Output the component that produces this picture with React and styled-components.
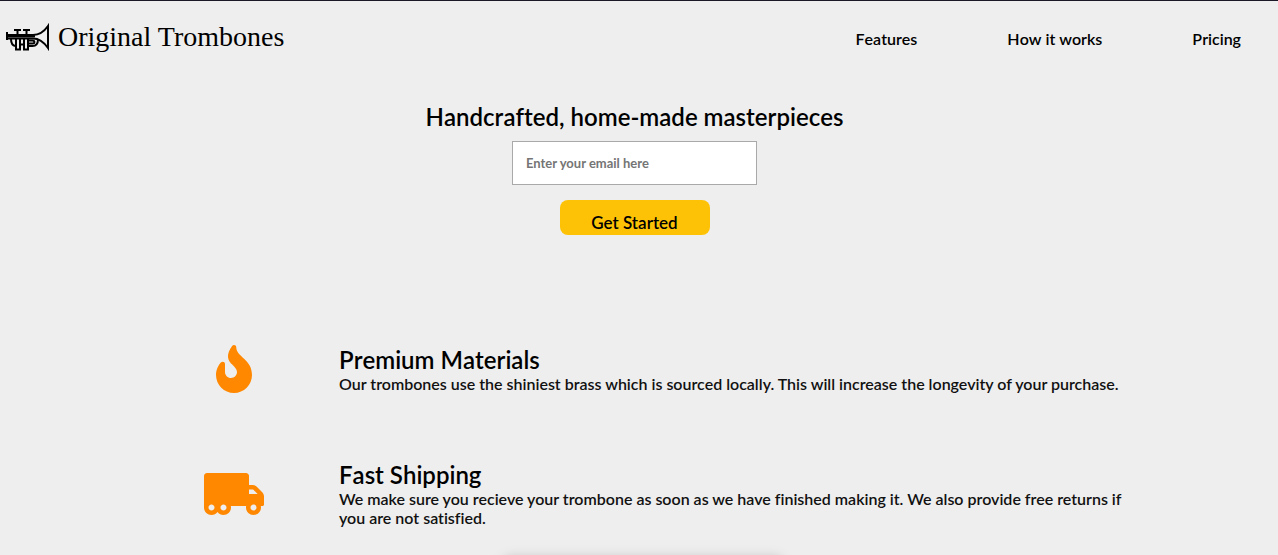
import React from "react";
import styled, { createGlobalStyle } from "styled-components";
import { FaFire, FaTruckMoving } from "react-icons/fa";

const GlobalStyle = createGlobalStyle`
  *, *::before, *::after { box-sizing: border-box; }
  body {
    margin: 0;
    background: #eee;
    color: #000;
    font-family: Lato, sans-serif;
    font-weight: 600;
    font-variant-ligatures: none;
    font-kerning: none;
  }
`;

const Page = styled.div`
  max-height: 100vh;
  overflow: hidden;
  border-top: 1px solid #1c1726;
  padding-right: 9px;
`;

const Header = styled.header`
  display: flex;
  align-items: center;
  justify-content: space-between;
  height: 76px;
  padding: 0 28px 0 5px;
`;

const Brand = styled.a`
  display: flex;
  align-items: center;
  gap: 8px;
  margin-bottom: 4px;
  color: #000;
  text-decoration: none;
  font: 400 28px/36px "Liberation Serif", serif;
  font-kerning: normal;
  white-space: nowrap;
`;

const Nav = styled.nav`
  display: flex;
  gap: 90px;
`;

const NavLink = styled.a`
  color: #000;
  font-size: 16px;
  line-height: 20px;
  text-decoration: none;
`;

const Hero = styled.form`
  display: flex;
  flex-direction: column;
  align-items: center;
  padding-top: 25px;
`;

const Title = styled.h1`
  margin: 0 0 10px;
  font-size: 24px;
  line-height: 29px;
  font-weight: 600;
`;

const EmailInput = styled.input`
  width: 245px;
  height: 44px;
  margin-bottom: 15px;
  padding: 0 13px;
  border: 1px solid #a9a9a9;
  background: #fff;
  font: 700 13px/16px Lato, sans-serif;
  &::placeholder { color: #757575; }
`;

const SubmitButton = styled.button`
  width: 150px;
  height: 35px;
  padding: 10px 0 0;
  border: 0;
  border-radius: 8px;
  background: #fdc206;
  color: #000;
  font: 600 17px/25px Lato, sans-serif;
`;

const Features = styled.section`
  display: flex;
  flex-direction: column;
  gap: 67px;
  width: 80%;
  max-width: 1015px;
  margin: 0 auto;
  padding-top: 110px;
`;

const Feature = styled.article`
  display: grid;
  grid-template-columns: 212px 1fr;
  align-items: center;
  padding-right: 14px;
`;

const FeatureIcon = styled.div`
  display: flex;
  justify-content: center;
  padding-left: 2px;
  color: #ff8800;
  svg { width: 60px; height: 48px; }
`;

const FeatureTitle = styled.h2`
  margin: 0;
  font-size: 24px;
  line-height: 29px;
  font-weight: 600;
`;

const FeatureText = styled.p`
  margin: 0;
  color: #111;
  font-size: 16px;
  line-height: 19px;
  font-kerning: normal;
`;

const Plans = styled.section`
  display: flex;
  justify-content: center;
  padding: 32px 0 0 16px;
`;

const PlanCard = styled.div`
  width: 276px;
  height: 240px;
  box-shadow: 0 0 12px rgba(0, 0, 0, 0.25);
`;

function TromboneLogo() {
  return (
    <svg width="45" height="30" viewBox="0 0 45 30" fill="none" stroke="#000" strokeWidth="2" aria-hidden="true">
      <path d="M2 10v8" />
      <path d="M2 13h26C34.500 13 39.500 9 43 4v22C39.500 21 35 16.500 28 16.500H2" />
      <path d="M2 14.300h28" strokeWidth="2.200" />
      <path d="M9 8h7M18 8h7M12.500 8v5M21.500 8v5" />
      <path d="M6 17c0 4 1.500 6.500 4.500 7M33 17c0 4.500-2 7-5.500 7H24" />
      <path d="M11 17v10.500h4V17M19 17v10.500h4V17M15 22.500h4" />
      <path d="M24 18.500h3.500c2.500 0 2.500 3 0 3H24" />
    </svg>
  );
}

const features = [
  {
    Icon: FaFire,
    title: "Premium Materials",
    text: "Our trombones use the shiniest brass which is sourced locally. This will increase the longevity of your purchase.",
  },
  {
    Icon: FaTruckMoving,
    title: "Fast Shipping",
    text: "We make sure you recieve your trombone as soon as we have finished making it. We also provide free returns if you are not satisfied.",
  },
];

export default function App() {
  return (
    <>
      <GlobalStyle />
      <Page>
        <Header>
          <Brand href="#top">
            <TromboneLogo />
            Original Trombones
          </Brand>
          <Nav>
            <NavLink href="#features">Features</NavLink>
            <NavLink href="#how">How it works</NavLink>
            <NavLink href="#pricing">Pricing</NavLink>
          </Nav>
        </Header>
        <main>
          <Hero onSubmit={(event) => event.preventDefault()}>
            <Title>Handcrafted, home-made masterpieces</Title>
            <EmailInput type="email" aria-label="Email" placeholder="Enter your email here" />
            <SubmitButton type="submit">Get Started</SubmitButton>
          </Hero>
          <Features id="features">
            {features.map(({ Icon, title, text }) => (
              <Feature key={title}>
                <FeatureIcon><Icon /></FeatureIcon>
                <div>
                  <FeatureTitle>{title}</FeatureTitle>
                  <FeatureText>{text}</FeatureText>
                </div>
              </Feature>
            ))}
          </Features>
          <Plans id="pricing">
            <PlanCard />
          </Plans>
        </main>
      </Page>
    </>
  );
}
